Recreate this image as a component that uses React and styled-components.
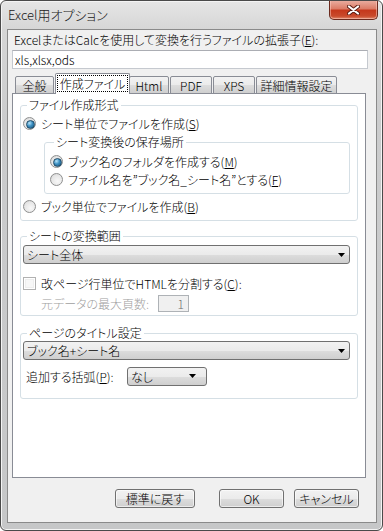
import React from 'react'
import styled, { createGlobalStyle } from 'styled-components'

const GlobalStyle = createGlobalStyle`
    html, body {
        margin: 0;
        padding: 0;
        background: #fff;
    }
    body {
        font-family: "Noto Sans CJK JP", "Noto Sans", sans-serif;
        font-size: 12px;
        font-weight: 300;
        font-feature-settings: "palt";
        color: #000;
    }
    * { box-sizing: border-box; }
`

function Arrow() {
    return (
        <svg width="7" height="4" viewBox="0 0 7 4">
            <path d="M0 0 H7 L3.5 4 Z" fill="#000" />
        </svg>
    )
}

function App() {
    return (
        <>
            <GlobalStyle />
            <Window>
                <TitleBar>
                    <Title>Excel用オプション</Title>
                    <CloseButton>
                        <svg width="13" height="10" viewBox="0 0 13 10">
                            <path d="M2 1.5 L11 8.5 M11 1.5 L2 8.5" stroke="#5a1d12" strokeWidth="4" strokeLinecap="round" />
                            <path d="M2 1.5 L11 8.5 M11 1.5 L2 8.5" stroke="#fff" strokeWidth="2.2" strokeLinecap="round" />
                        </svg>
                    </CloseButton>
                </TitleBar>
                <Client>
                    <TopLabel>ExcelまたはCalcを使用して変換を行うファイルの拡張子(<u>E</u>):</TopLabel>
                    <TextBox>xls,xlsx,ods</TextBox>
                    <TabStrip>
                        <Tab $w={39}>全般</Tab>
                        <Tab $w={75} $active><Focus>作成ファイル</Focus></Tab>
                        <Tab $w={40}>Html</Tab>
                        <Tab $w={42}>PDF</Tab>
                        <Tab $w={42}>XPS</Tab>
                        <Tab $w={81}>詳細情報設定</Tab>
                    </TabStrip>
                    <Panel>
                        <Group $pb={5}>
                            <Legend>ファイル作成形式</Legend>
                            <Row $mt={2}>
                                <Radio $checked />
                                <span>シート単位でファイルを作成(<u>S</u>)</span>
                            </Row>
                            <InnerGroup $pb={5}>
                                <Legend>シート変換後の保存場所</Legend>
                                <Row $mt={3}>
                                    <Radio $checked />
                                    <span>ブック名のフォルダを作成する(<u>M</u>)</span>
                                </Row>
                                <Row>
                                    <Radio />
                                    <span>ファイル名を”ブック名_シート名”とする(<u>F</u>)</span>
                                </Row>
                            </InnerGroup>
                            <Row $mt={3}>
                                <Radio />
                                <span>ブック単位でファイルを作成(<u>B</u>)</span>
                            </Row>
                        </Group>

                        <Group $mt={8} $pb={3}>
                            <Legend>シートの変換範囲</Legend>
                            <Select $mt={2}>
                                <span>シート全体</span>
                                <Arrow />
                            </Select>
                            <Row $mt={10}>
                                <CheckBox />
                                <span>改ページ行単位でHTMLを分割する(<u>C</u>):</span>
                            </Row>
                            <Row $mt={2}>
                                <PageLabel>元データの最大頁数:</PageLabel>
                                <NumberBox>1</NumberBox>
                            </Row>
                        </Group>

                        <Group $mt={10} $pb={13}>
                            <Legend>ページのタイトル設定</Legend>
                            <Select $mt={1}>
                                <span>ブック名+シート名</span>
                                <Arrow />
                            </Select>
                            <Row $mt={7}>
                                <BracketLabel>追加する括弧(<u>P</u>):</BracketLabel>
                                <Select $small>
                                    <span>なし</span>
                                    <Arrow />
                                </Select>
                            </Row>
                        </Group>
                    </Panel>
                    <ButtonRow>
                        <Button $w={80} $gap={24}>標準に戻す</Button>
                        <Button $w={65} $gap={10}>OK</Button>
                        <Button $w={65}>キャンセル</Button>
                    </ButtonRow>
                </Client>
            </Window>
        </>
    )
}

export default App

const Window = styled.div`
    width: 383px;
    height: 531px;
    display: flex;
    flex-direction: column;
    border: 1px solid #4a4a4a;
    border-radius: 6px;
    background: linear-gradient(to bottom, #e6e6e6 0px, #d6d6d6 28px, #cbcccd 120px, #c6c7c8 100%);
    box-shadow: inset 0 0 0 1px #f4f4f4;
    overflow: hidden;
`

const TitleBar = styled.div`
    height: 28px;
    display: flex;
    justify-content: space-between;
    align-items: flex-start;
`

const Title = styled.div`
    padding-left: 7px;
    line-height: 28px;
    font-size: 13px;
    color: #1a1a1a;
`

const CloseButton = styled.div`
    width: 49px;
    height: 20px;
    margin-top: -1px;
    margin-right: 4px;
    display: flex;
    align-items: center;
    justify-content: center;
    border: 1px solid #6b2a1e;
    border-top: none;
    border-radius: 0 0 5px 5px;
    background: linear-gradient(to bottom, #ebb1a4 0%, #dc7d68 45%, #c5381c 55%, #c94a2c 85%, #e08a6d 100%);
    box-shadow: inset 0 0 0 1px rgba(255, 210, 200, 0.5);
`

const Client = styled.div`
    flex: 1;
    margin: 0 5px 7px 6px;
    border: 1px solid #8a8a8a;
    background: #f0f0f0;
    padding: 0 8px 0 4px;
    display: flex;
    flex-direction: column;
`

const TopLabel = styled.div`
    margin-top: 2px;
    padding-left: 2px;
    line-height: 16px;
    white-space: nowrap;
`

const TextBox = styled.div`
    margin-top: 2px;
    height: 19px;
    border: 1px solid #c5c9cf;
    border-top-color: #abadb3;
    background: #fff;
    padding-left: 2px;
    line-height: 17px;
`

const TabStrip = styled.div`
    margin-top: 4px;
    height: 21px;
    margin-bottom: -1px;
    padding-left: 3px;
    display: flex;
    align-items: flex-end;
    position: relative;
    z-index: 1;
    margin-right: 2px;
`

const Tab = styled.div`
    width: ${p => p.$w}px;
    height: ${p => (p.$active ? 21 : 18)}px;
    margin: 0 ${p => (p.$active ? -2 : 0)}px 0 ${p => (p.$active ? -1 : 0)}px;
    border: 1px solid #898c95;
    border-bottom: ${p => (p.$active ? 'none' : '1px solid #898c95')};
    border-radius: 2px 2px 0 0;
    background: ${p => (p.$active
        ? '#fff'
        : 'linear-gradient(to bottom, #f2f2f2 0%, #ebebeb 50%, #dddddd 51%, #cfcfcf 100%)')};
    display: flex;
    justify-content: center;
    align-items: ${p => (p.$active ? 'flex-start' : 'center')};
    padding-top: ${p => (p.$active ? 2 : 0)}px;
    line-height: 15px;
    white-space: nowrap;
    position: relative;
    z-index: ${p => (p.$active ? 2 : 1)};
    & + & { margin-left: ${p => (p.$active ? -1 : 1)}px; }
`

const Focus = styled.span`
    outline: 1px dotted #000;
    padding: 0 2px;
`

const Panel = styled.div`
    height: 385px;
    margin-right: 2px;
    border: 1px solid #898c95;
    background: #fff;
    padding: 4px 7px 0 7px;
`

const Group = styled.fieldset`
    margin: ${p => p.$mt || 0}px 0 0 0;
    padding: 0 2px ${p => p.$pb || 0}px 2px;
    border: 1px solid #d5dfe5;
    border-radius: 3px;
    min-width: 0;
`

const InnerGroup = styled(Group)`
    margin: 3px 5px 0 21px;
    padding-left: 5px;
`

const Legend = styled.legend`
    margin-left: 4px;
    padding: 0 2px;
    line-height: 14px;
`

const Row = styled.div`
    margin-top: ${p => p.$mt || 0}px;
    height: 18px;
    display: flex;
    align-items: center;
    gap: 5px;
    white-space: nowrap;
`

const Radio = styled.span`
    width: 13px;
    height: 13px;
    flex: none;
    border-radius: 50%;
    border: 1px solid #8e8f8f;
    background: radial-gradient(circle at 60% 65%, #f8f8f8 0%, #e6e6e6 60%, #cfcfcf 100%);
    position: relative;

    &::after {
        content: '';
        display: ${p => (p.$checked ? 'block' : 'none')};
        position: absolute;
        left: 2px;
        top: 2px;
        width: 7px;
        height: 7px;
        border-radius: 50%;
        border: 1px solid #1f4a66;
        background: radial-gradient(circle at 35% 30%, #b8e6fb 0%, #3b8fc2 45%, #1c5479 100%);
    }
`

const CheckBox = styled.span`
    width: 13px;
    height: 13px;
    flex: none;
    border: 1px solid #b1b1b1;
    background: #f7f7f7;
    box-shadow: inset 0 0 0 1px #fff, inset 0 0 0 2px #eeeeee;
`

const Select = styled.div`
    margin-top: ${p => p.$mt || 0}px;
    margin-right: ${p => (p.$small ? 0 : 5)}px;
    width: ${p => (p.$small ? '80px' : 'auto')};
    height: 19px;
    border: 1px solid #707070;
    border-radius: 3px;
    background: linear-gradient(to bottom, #f2f2f2 0%, #ebebeb 50%, #dddddd 51%, #cfcfcf 100%);
    display: flex;
    justify-content: space-between;
    align-items: center;
    padding: 0 ${p => (p.$small ? 10 : 4)}px 0 3px;
    line-height: 17px;
    white-space: nowrap;
`

const PageLabel = styled.span`
    width: 112px;
    margin-left: 18px;
    color: #a0a0a0;
`

const NumberBox = styled.div`
    width: 31px;
    height: 17px;
    border: 1px solid #aeb2b6;
    background: #f0f0f0;
    color: #6d6d6d;
    text-align: right;
    padding-right: 4px;
    line-height: 15px;
`

const BracketLabel = styled.span`
    width: 96px;
    margin-left: 3px;
`

const ButtonRow = styled.div`
    margin-top: 11px;
    padding-right: 9px;
    display: flex;
    justify-content: flex-end;
`

const Button = styled.div`
    width: ${p => p.$w}px;
    height: 19px;
    margin-right: ${p => p.$gap || 0}px;
    border: 1px solid #707070;
    border-radius: 3px;
    background: linear-gradient(to bottom, #f2f2f2 0%, #ebebeb 50%, #dddddd 51%, #cfcfcf 100%);
    box-shadow: inset 0 0 0 1px rgba(255, 255, 255, 0.6);
    display: flex;
    align-items: center;
    justify-content: center;
    line-height: 17px;
`
